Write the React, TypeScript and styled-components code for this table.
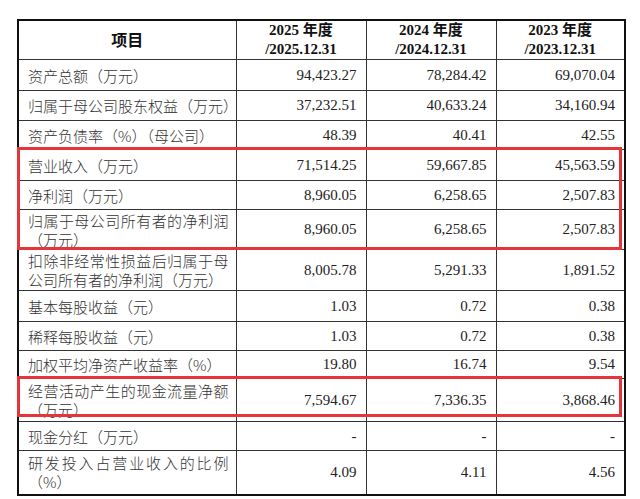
import React from "react";
import styled, { createGlobalStyle } from "styled-components";

const Global = createGlobalStyle`
  html, body { margin: 0; padding: 0; background: #ffffff; }
  body { font-family: "Liberation Serif", "Noto Sans CJK SC", serif; }
`;

const Page = styled.div`
  width: 640px;
  height: 499px;
  padding: 19px 0 0 17px;
  box-sizing: border-box;
  background: #ffffff;
`;

const Frame = styled.div`
  position: relative;
  width: 607px;
`;

const Table = styled.table`
  width: 607px;
  border-collapse: collapse;
  table-layout: fixed;
  border: 2px solid #111;
  font-family: "Liberation Serif", "Noto Sans CJK SC", serif;
  font-size: 15px;
  color: #222;
`;

const Row = styled.tr<{ $h: number }>`
  height: ${(p) => p.$h}px;
`;

const HeadCell = styled.th<{ $big?: boolean }>`
  border: 1px solid #333;
  padding: 0 4px;
  text-align: center;
  vertical-align: middle;
  font-weight: 700;
  font-size: ${(p) => (p.$big ? 16 : 15)}px;
  line-height: 19px;
  color: #111;
`;

const LabelCell = styled.td<{ $nowrap?: boolean }>`
  border: 1px solid #333;
  padding: 0 7px 0 9px;
  vertical-align: middle;
  text-align: left;
  font-family: "Noto Sans CJK SC", "Liberation Serif", sans-serif;
  font-weight: 300;
  font-size: 15px;
  line-height: 19px;
  color: #333;
  white-space: ${(p) => (p.$nowrap ? "nowrap" : "normal")};
`;

const Justified = styled.div`
  text-align: justify;
  text-align-last: left;
`;

const NumCell = styled.td`
  border: 1px solid #333;
  padding: 0 9px 0 4px;
  vertical-align: middle;
  text-align: right;
  font-family: "Liberation Serif", serif;
  font-size: 15px;
  color: #222;
`;

const Mark = styled.div<{ $top: number; $height: number }>`
  position: absolute;
  left: 0;
  width: 605px;
  top: ${(p) => p.$top}px;
  height: ${(p) => p.$height}px;
  border: 3px solid #e5353b;
  box-sizing: border-box;
  pointer-events: none;
`;

type Item = {
  label: string;
  values: [string, string, string];
  h: number;
  wrap?: boolean;
  nowrap?: boolean;
};

const rows: Item[] = [
  { label: "资产总额（万元）", values: ["94,423.27", "78,284.42", "69,070.04"], h: 31 },
  { label: "归属于母公司股东权益（万元）", values: ["37,232.51", "40,633.24", "34,160.94"], h: 30, nowrap: true },
  { label: "资产负债率（%）（母公司）", values: ["48.39", "40.41", "42.55"], h: 29, nowrap: true },
  { label: "营业收入（万元）", values: ["71,514.25", "59,667.85", "45,563.59"], h: 31 },
  { label: "净利润（万元）", values: ["8,960.05", "6,258.65", "2,507.83"], h: 29 },
  { label: "归属于母公司所有者的净利润（万元）", values: ["8,960.05", "6,258.65", "2,507.83"], h: 40, wrap: true },
  { label: "扣除非经常性损益后归属于母公司所有者的净利润（万元）", values: ["8,005.78", "5,291.33", "1,891.52"], h: 41, wrap: true },
  { label: "基本每股收益（元）", values: ["1.03", "0.72", "0.38"], h: 31 },
  { label: "稀释每股收益（元）", values: ["1.03", "0.72", "0.38"], h: 29 },
  { label: "加权平均净资产收益率（%）", values: ["19.80", "16.74", "9.54"], h: 28 },
  { label: "经营活动产生的现金流量净额（万元）", values: ["7,594.67", "7,336.35", "3,868.46"], h: 43, wrap: true },
  { label: "现金分红（万元）", values: ["-", "-", "-"], h: 29 },
  { label: "研发投入占营业收入的比例（%）", values: ["4.09", "4.11", "4.56"], h: 44, wrap: true },
];

export default function App() {
  return (
    <>
      <Global />
      <Page>
        <Frame>
          <Table>
            <colgroup>
              <col style={{ width: 218 }} />
              <col style={{ width: 130 }} />
              <col style={{ width: 130 }} />
              <col style={{ width: 129 }} />
            </colgroup>
            <thead>
              <Row $h={39}>
                <HeadCell $big>项目</HeadCell>
                <HeadCell>
                  2025 年度
                  <br />
                  /2025.12.31
                </HeadCell>
                <HeadCell>
                  2024 年度
                  <br />
                  /2024.12.31
                </HeadCell>
                <HeadCell>
                  2023 年度
                  <br />
                  /2023.12.31
                </HeadCell>
              </Row>
            </thead>
            <tbody>
              {rows.map((r) => (
                <Row key={r.label} $h={r.h}>
                  <LabelCell $nowrap={r.nowrap}>
                    {r.wrap ? <Justified>{r.label}</Justified> : r.label}
                  </LabelCell>
                  {r.values.map((v, i) => (
                    <NumCell key={i}>{v}</NumCell>
                  ))}
                </Row>
              ))}
            </tbody>
          </Table>
          <Mark $top={128} $height={103} />
          <Mark $top={357} $height={41} />
        </Frame>
      </Page>
    </>
  );
}
